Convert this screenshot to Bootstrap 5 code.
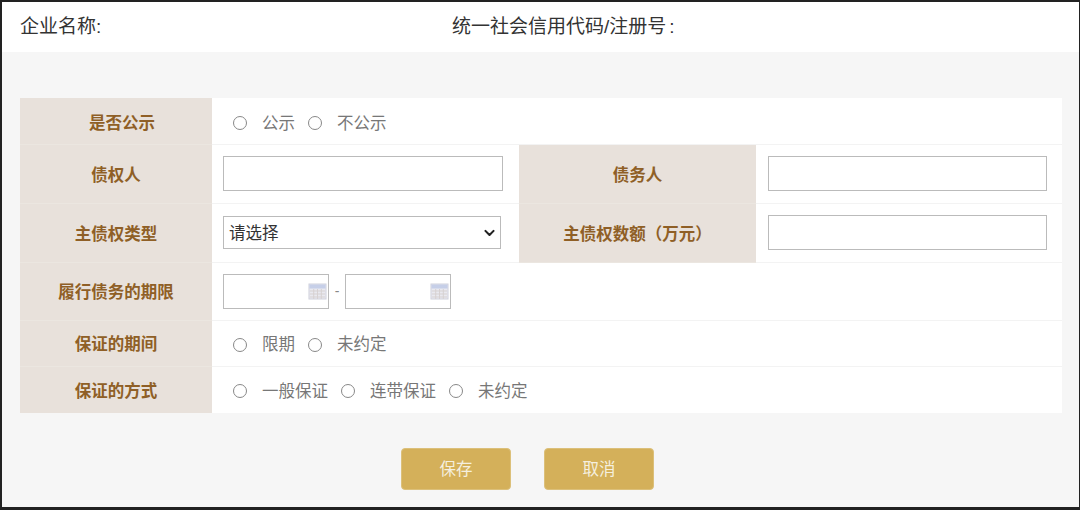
<!DOCTYPE html>
<html lang="zh-CN">
<head>
<meta charset="utf-8">
<title>担保信息</title>
<link rel="stylesheet" href="https://cdn.jsdelivr.net/npm/bootstrap@5.3.0/dist/css/bootstrap.min.css">
<style>
html,body{height:100%;margin:0;background:#f5f5f5;overflow:hidden}
body{font-family:"Liberation Sans","Noto Sans CJK SC",sans-serif}
.frame{width:1080px;height:510px;border:solid #222;border-width:2px 1px 3px 2px;background:#f6f6f6}
.head-bar{height:50px;background:#fff;padding-left:18px;font-size:19px;color:#333;align-items:center}
.head-one{width:432px}
.colon{margin-left:3px}
.form-tbl{width:1042px;margin:46px 0 0 18px;table-layout:fixed;border-collapse:collapse;background:#fff}
.form-tbl td,.form-tbl th{padding:0;vertical-align:middle;border:0;border-bottom:1px solid #f3f3f3}
.form-tbl tr:last-child td,.form-tbl tr:last-child th{border-bottom:0}
.form-tbl th{background:#e8e1db;color:#8f5f26;font-weight:700;font-size:16.5px;text-align:center;border-bottom-color:#ebe6e0;padding-top:3px}
.form-tbl th.lbl-shift{padding-left:12px;padding-top:5px}
.r1{height:46px}.r2{height:59px}.r3{height:59px}.r4{height:58px}.r5{height:46px}.r6{height:47px}
.form-tbl td.cell{padding-left:11px}
.form-tbl td.cell-r{padding-left:12px}
.radios{padding-left:21px;gap:13px;color:#777;font-size:16.5px;align-items:center;padding-top:3px}
.radios-top{padding-top:5px}
.opt{display:flex;align-items:center;gap:15px;margin:0}
.opt input{appearance:none;width:14px;height:14px;border:1.5px solid #888;border-radius:50%;margin:0;background:#fff;flex:none}
.fld{display:block;height:35px;border:1px solid #bbb;background:#fff;border-radius:0;padding:0 5px}
.fld-a{width:280px}
.fld-b{width:279px}
.sel{width:278px;height:33px;padding:2px 28px 0 5px;border:1px solid #bbb;border-radius:0;background-color:#fff;background-image:url("data:image/svg+xml,%3csvg xmlns='http://www.w3.org/2000/svg' viewBox='0 0 16 16'%3e%3cpath fill='none' stroke='%23222' stroke-linecap='round' stroke-linejoin='round' stroke-width='2.6' d='m3 6 5 5 5-5'/%3e%3c/svg%3e");background-position:right 4px center;background-size:13px 13px;font-size:16.5px;color:#333;font-family:inherit}
.date-wrap{width:106px;height:35px;border:1px solid #bbb;background:#fff;justify-content:flex-end;align-items:center;padding-right:1px}
.dash{width:16px;text-align:center;color:#888;font-size:14px}
.foot-bar{margin:35px 0 0 0;padding-left:399px;gap:33px}
.act{width:110px;height:42px;padding:0;background:#d4b05a;border:1px solid #dcc07a;border-radius:4px;color:#f5efdf;font-size:16.5px}
.act:hover{background:#d4b05a;color:#f5efdf}
</style>
</head>
<body>
<div class="frame">
  <div class="head-bar d-flex">
    <div class="head-one">企业名称:</div>
    <div>统一社会信用代码/注册号<span class="colon">:</span></div>
  </div>
  <table class="form-tbl">
    <colgroup><col style="width:192px"><col style="width:307px"><col style="width:237px"><col style="width:306px"></colgroup>
    <tr class="r1">
      <th class="lbl-shift">是否公示</th>
      <td colspan="3"><div class="radios radios-top d-flex">
        <label class="opt"><input type="radio" name="a">公示</label>
        <label class="opt"><input type="radio" name="a">不公示</label>
      </div></td>
    </tr>
    <tr class="r2">
      <th>债权人</th>
      <td class="cell"><input class="fld fld-a" type="text" aria-label="债权人"></td>
      <th>债务人</th>
      <td class="cell-r"><input class="fld fld-b" type="text" aria-label="债务人"></td>
    </tr>
    <tr class="r3">
      <th>主债权类型</th>
      <td class="cell"><select class="form-select sel" aria-label="主债权类型"><option>请选择</option></select></td>
      <th>主债权数额（万元）</th>
      <td class="cell-r"><input class="fld fld-b" type="text" aria-label="主债权数额"></td>
    </tr>
    <tr class="r4">
      <th>履行债务的期限</th>
      <td class="cell" colspan="3"><div class="d-flex align-items-center">
        <div class="date-wrap d-flex"><svg width="19" height="17" viewBox="0 0 20 17" preserveAspectRatio="none" aria-hidden="true"><rect x="1" y="1" width="18" height="15" fill="#e9e9f0" stroke="#d0d1dc"/><rect x="1.5" y="1.5" width="17" height="4" fill="#c6cfe8"/><path d="M2 8h16M2 11h16M2 14h16M6 6v10M10 6v10M14 6v10" stroke="#d6d1d1" stroke-width="1" fill="none"/></svg></div>
        <span class="dash">-</span>
        <div class="date-wrap d-flex"><svg width="19" height="17" viewBox="0 0 20 17" preserveAspectRatio="none" aria-hidden="true"><rect x="1" y="1" width="18" height="15" fill="#e9e9f0" stroke="#d0d1dc"/><rect x="1.5" y="1.5" width="17" height="4" fill="#c6cfe8"/><path d="M2 8h16M2 11h16M2 14h16M6 6v10M10 6v10M14 6v10" stroke="#d6d1d1" stroke-width="1" fill="none"/></svg></div>
      </div></td>
    </tr>
    <tr class="r5">
      <th>保证的期间</th>
      <td colspan="3"><div class="radios d-flex">
        <label class="opt"><input type="radio" name="b">限期</label>
        <label class="opt"><input type="radio" name="b">未约定</label>
      </div></td>
    </tr>
    <tr class="r6">
      <th>保证的方式</th>
      <td colspan="3"><div class="radios d-flex">
        <label class="opt"><input type="radio" name="c">一般保证</label>
        <label class="opt"><input type="radio" name="c">连带保证</label>
        <label class="opt"><input type="radio" name="c">未约定</label>
      </div></td>
    </tr>
  </table>
  <div class="foot-bar d-flex">
    <button type="button" class="btn act">保存</button>
    <button type="button" class="btn act">取消</button>
  </div>
</div>
<script src="https://cdn.jsdelivr.net/npm/bootstrap@5.3.0/dist/js/bootstrap.bundle.min.js"></script>
</body>
</html>
